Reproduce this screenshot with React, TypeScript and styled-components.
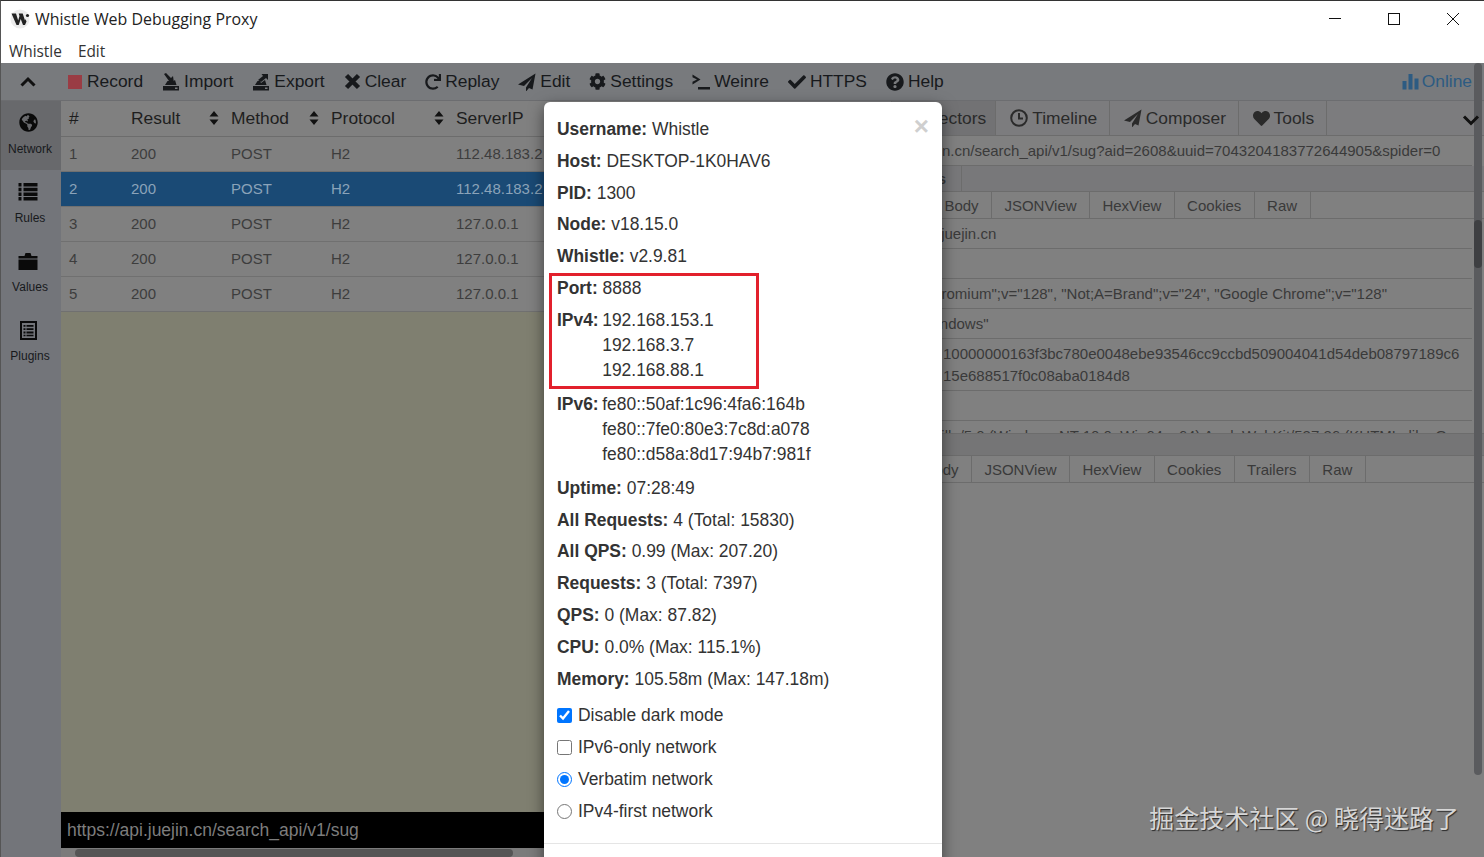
import React from "react"
import styled, { createGlobalStyle } from "styled-components"
import {
  FaCheck,
  FaCog,
  FaGlobeAmericas,
  FaHeart,
  FaQuestionCircle,
  FaRedo,
} from "react-icons/fa"

const GlobalStyle = createGlobalStyle`
  html, body {
    margin: 0;
    padding: 0;
    background: #808080;
  }
  * {
    box-sizing: border-box;
  }
`

const Sans = `"Liberation Sans", Arial, sans-serif`

const Logo = () => (
  <svg width="20" height="20" viewBox="0 0 20 20">
    <circle cx="10" cy="10" r="9.500" fill="#ececec" />
    <path
      d="M1.500 4.500h4.500l2.200 7 1.300-4.500-.8-2.500h4l2.300 7 .5-1.500 1 2.500-1.500 3.500h-2l-2.300-6-2 6H6.500z"
      fill="#222"
    />
    <circle cx="17.500" cy="6.500" r="1.600" fill="#222" />
  </svg>
)

const SendIcon = () => (
  <svg width="18" height="18" viewBox="0 0 18 18">
    <path d="M17.500.5 0 11.500l6 1.500 8-8-6 9.500v4l3-3.500 3.500 1.500z" fill="currentColor" />
  </svg>
)

const RemoveIcon = () => (
  <svg width="17" height="17" viewBox="0 0 17 17">
    <path d="M2.500 2.500l12 12M14.500 2.500l-12 12" stroke="currentColor" strokeWidth="4.500" />
  </svg>
)

const TrayIcon = ({ up }: { up?: boolean }) => (
  <svg width="18" height="18" viewBox="0 0 18 18">
    <path d="M1 13h16v4.500H1zM3 12l2.500-4H8l1 2 4-3 1.500 5z" fill="currentColor" />
    <path
      d={up ? "M6 7l5-4-1.500-2H16v6l-2-2-5 4z" : "M2 1l2-1 5 5 2-2 1 7H5l2-2z"}
      fill="currentColor"
    />
    <rect x="13" y="14.500" width="2.500" height="1.500" fill="#787a7d" />
  </svg>
)

const ConsoleIcon = () => (
  <svg width="18" height="18" viewBox="0 0 18 18">
    <path d="M0.500 1.500 8.500 6.500 0.500 11.500V8.800L5 6.500 0.500 4.200z" fill="currentColor" />
    <rect x="6" y="14" width="12" height="2.500" fill="currentColor" />
  </svg>
)

const StatsIcon = () => (
  <svg width="17" height="17" viewBox="0 0 17 17">
    <path d="M0.500 8h4v8.500h-4zM6.500 1h4v15.500h-4zM12.500 5.500h4v11h-4z" fill="currentColor" />
  </svg>
)

const ClockIcon = () => (
  <svg width="18" height="18" viewBox="0 0 18 18">
    <circle cx="9" cy="9" r="7.800" fill="none" stroke="currentColor" strokeWidth="2" />
    <path d="M9 4v5.500h4" fill="none" stroke="currentColor" strokeWidth="2" />
  </svg>
)

const Chevron = ({ down }: { down?: boolean }) => (
  <svg width="18" height="12" viewBox="0 0 18 12">
    <path
      d={down ? "M2 2.500 9 9.500l7-7" : "M2.500 9.500 9 3l6.500 6.500"}
      fill="none"
      stroke="currentColor"
      strokeWidth="3"
    />
  </svg>
)

const SortIcon = () => (
  <svg width="10" height="16" viewBox="0 0 10 16">
    <path d="M5 1 9.500 6.500H.5zM5 15 .5 9.500h9z" fill="#111" />
  </svg>
)

const ListIcon = () => (
  <svg width="20" height="20" viewBox="0 0 20 20">
    <path
      d="M.5 1h3v3.500h-3zM5.500 1h14v3.500h-14zM.5 5.700h3v3.500h-3zM5.500 5.700h14v3.500h-14zM.5 10.400h3v3.500h-3zM5.500 10.400h14v3.500h-14zM.5 15.100h3v3.500h-3zM5.500 15.100h14v3.500h-14z"
      fill="currentColor"
    />
  </svg>
)

const FolderIcon = () => (
  <svg width="20" height="20" viewBox="0 0 20 20">
    <path d="M.5 5h6l1-3h5l1 3h6v2.500H.5zM.5 8.500h19V19H.5z" fill="currentColor" />
  </svg>
)

const ListAltIcon = () => (
  <svg width="20" height="20" viewBox="0 0 20 20">
    <rect x="3" y="2" width="15" height="17" fill="none" stroke="currentColor" strokeWidth="2" />
    <path
      d="M5.500 5h2v1.800h-2zM8.500 5h7v1.800h-7zM5.500 8.300h2v1.800h-2zM8.500 8.300h7v1.800h-7zM5.500 11.600h2v1.800h-2zM8.500 11.600h7v1.800h-7zM5.500 14.800h2v1.500h-2zM8.500 14.800h7v1.500h-7z"
      fill="currentColor"
    />
  </svg>
)

const MinimizeIcon = () => (
  <svg width="14" height="14" viewBox="0 0 14 14">
    <path d="M1 6.500h12" stroke="#111" strokeWidth="1" />
  </svg>
)

const MaximizeIcon = () => (
  <svg width="14" height="14" viewBox="0 0 14 14">
    <rect x="1.500" y="1.500" width="11" height="11" fill="none" stroke="#111" strokeWidth="1" />
  </svg>
)

const CloseIcon = () => (
  <svg width="14" height="14" viewBox="0 0 14 14">
    <path d="M1 1l12 12M13 1 1 13" stroke="#111" strokeWidth="1" />
  </svg>
)

const toolbarItems = [
  { label: "Import", icon: <TrayIcon /> },
  { label: "Export", icon: <TrayIcon up /> },
  { label: "Clear", icon: <RemoveIcon /> },
  { label: "Replay", icon: <FaRedo size={16} /> },
  { label: "Edit", icon: <SendIcon /> },
  { label: "Settings", icon: <FaCog size={17} /> },
  { label: "Weinre", icon: <ConsoleIcon /> },
  { label: "HTTPS", icon: <FaCheck size={18} /> },
  { label: "Help", icon: <FaQuestionCircle size={18} /> },
]

const sideItems = [
  { label: "Network", icon: <FaGlobeAmericas size={19} />, active: true },
  { label: "Rules", icon: <ListIcon /> },
  { label: "Values", icon: <FolderIcon /> },
  { label: "Plugins", icon: <ListAltIcon /> },
]

const sessions = [
  { id: 1, ip: "112.48.183.2" },
  { id: 2, ip: "112.48.183.2", selected: true },
  { id: 3, ip: "127.0.0.1" },
  { id: 4, ip: "127.0.0.1" },
  { id: 5, ip: "127.0.0.1" },
]

const stats = [
  ["Uptime:", "07:28:49"],
  ["All Requests:", "4 (Total: 15830)"],
  ["All QPS:", "0.99 (Max: 207.20)"],
  ["Requests:", "3 (Total: 7397)"],
  ["QPS:", "0 (Max: 87.82)"],
  ["CPU:", "0.0% (Max: 115.1%)"],
  ["Memory:", "105.58m (Max: 147.18m)"],
]

const App = () => (
  <Window>
    <GlobalStyle />
    <TitleBar>
      <TitleLeft>
        <Logo />
        <TitleText>Whistle Web Debugging Proxy</TitleText>
      </TitleLeft>
      <WindowControls>
        <WindowButton><MinimizeIcon /></WindowButton>
        <WindowButton><MaximizeIcon /></WindowButton>
        <WindowButton><CloseIcon /></WindowButton>
      </WindowControls>
    </TitleBar>
    <MenuBar>
      <span>Whistle</span>
      <span>Edit</span>
    </MenuBar>
    <Workspace>
      <Toolbar>
        <Collapse><Chevron /></Collapse>
        <ToolItems>
          <ToolItem>
            <RecordDot />
            Record
          </ToolItem>
          {toolbarItems.map(item => (
            <ToolItem key={item.label}>
              {item.icon}
              {item.label}
            </ToolItem>
          ))}
        </ToolItems>
        <OnlineStatus>
          <StatsIcon />
          Online
        </OnlineStatus>
      </Toolbar>
      <Body>
        <Sidebar>
          {sideItems.map(item => (
            <SideItem key={item.label} $active={item.active}>
              <SideIcon>{item.icon}</SideIcon>
              {item.label}
            </SideItem>
          ))}
        </Sidebar>
        <LeftPanel>
          <TableHead>
            <HeadCell>#</HeadCell>
            <HeadCell>Result<SortIcon /></HeadCell>
            <HeadCell>Method<SortIcon /></HeadCell>
            <HeadCell>Protocol<SortIcon /></HeadCell>
            <HeadCell>ServerIP</HeadCell>
          </TableHead>
          {sessions.map(s => (
            <TableRow key={s.id} $selected={s.selected}>
              <Cell>{s.id}</Cell>
              <Cell>200</Cell>
              <Cell>POST</Cell>
              <Cell>H2</Cell>
              <Cell>{s.ip}</Cell>
            </TableRow>
          ))}
          <EmptyArea />
          <StatusBar>https://api.juejin.cn/search_api/v1/sug</StatusBar>
          <HScroll><HThumb /></HScroll>
        </LeftPanel>
        <RightPanel>
          <MainTabs>
            <MainTab>Overview</MainTab>
            <MainTab $active>Inspectors</MainTab>
            <MainTab><ClockIcon />Timeline</MainTab>
            <MainTab><SendIcon />Composer</MainTab>
            <MainTab><FaHeart size={17} />Tools</MainTab>
            <CollapseRight><Chevron down /></CollapseRight>
          </MainTabs>
          <InfoRow $indent={86}>
            https://api.juejin.cn/search_api/v1/sug?aid=2608&uuid=7043204183772644905&spider=0
          </InfoRow>
          <PaneTitle><PaneLabel>Headers</PaneLabel></PaneTitle>
          <SubTabs $indent={172}>
            {["Body", "JSONView", "HexView", "Cookies", "Raw"].map(t => (
              <SubTab key={t}>{t}</SubTab>
            ))}
          </SubTabs>
          <RequestRows>
            <InfoRow $indent={157}>api.juejin.cn</InfoRow>
            <InfoRow $indent={0} />
            <InfoRow $indent={157}>
              "Chromium";v="128", "Not;A=Brand";v="24", "Google Chrome";v="128"
            </InfoRow>
            <InfoRow $indent={157}>"Windows"</InfoRow>
            <InfoRow $indent={183}>
              10000000163f3bc780e0048ebe93546cc9ccbd509004041d54deb08797189c6
              <br />
              15e688517f0c08aba0184d8
            </InfoRow>
            <InfoRow $indent={0} />
            <InfoRow $indent={153}>
              Mozilla/5.0 (Windows NT 10.0; Win64; x64) AppleWebKit/537.36 (KHTML, like Ge
            </InfoRow>
          </RequestRows>
          <Splitter />
          <SubTabs $indent={152}>
            {["Body", "JSONView", "HexView", "Cookies", "Trailers", "Raw"].map(t => (
              <SubTab key={t}>{t}</SubTab>
            ))}
          </SubTabs>
        </RightPanel>
      </Body>
      <VScroll><VThumb /></VScroll>
      <Modal>
        <CloseX>×</CloseX>
        <Line><b>Username:</b> Whistle</Line>
        <Line><b>Host:</b> DESKTOP-1K0HAV6</Line>
        <Line><b>PID:</b> 1300</Line>
        <Line><b>Node:</b> v18.15.0</Line>
        <Line><b>Whistle:</b> v2.9.81</Line>
        <Highlight>
          <Line><b>Port:</b> 8888</Line>
          <AddressGroup>
            <b>IPv4:</b>
            <div>
              <div>192.168.153.1</div>
              <div>192.168.3.7</div>
              <div>192.168.88.1</div>
            </div>
          </AddressGroup>
        </Highlight>
        <AddressGroup>
          <b>IPv6:</b>
          <div>
            <div>fe80::50af:1c96:4fa6:164b</div>
            <div>fe80::7fe0:80e3:7c8d:a078</div>
            <div>fe80::d58a:8d17:94b7:981f</div>
          </div>
        </AddressGroup>
        {stats.map(([name, value]) => (
          <Line key={name}><b>{name}</b> {value}</Line>
        ))}
        <Options>
          <OptionLabel><input type="checkbox" defaultChecked />Disable dark mode</OptionLabel>
          <OptionLabel><input type="checkbox" />IPv6-only network</OptionLabel>
          <OptionLabel><input type="radio" name="network" defaultChecked />Verbatim network</OptionLabel>
          <OptionLabel><input type="radio" name="network" />IPv4-first network</OptionLabel>
        </Options>
        <ModalFooter />
      </Modal>
    </Workspace>
    <Watermark>掘金技术社区 @ 晓得迷路了</Watermark>
  </Window>
)

const Window = styled.div`
  position: relative;
  display: flex;
  flex-direction: column;
  width: 1484px;
  height: 857px;
  overflow: hidden;
  border-top: 1px solid #333;
  border-left: 1px solid #555;
  background: #fff;
  font-family: ${Sans};
`
const TitleBar = styled.div`
  display: flex;
  align-items: center;
  justify-content: space-between;
  height: 36px;
  padding-left: 9px;
`
const TitleLeft = styled.div`
  display: flex;
  align-items: center;
  gap: 5px;
`
const TitleText = styled.div`
  font-family: "Open Sans", sans-serif;
  font-size: 15.950px;
  color: #222;
`
const WindowControls = styled.div`
  display: flex;
  padding-right: 2px;
`
const WindowButton = styled.div`
  display: flex;
  align-items: center;
  justify-content: center;
  width: 59px;
  height: 36px;
`
const MenuBar = styled.div`
  display: flex;
  gap: 16px;
  height: 26px;
  padding: 4px 0 0 8px;
  font-family: "Open Sans", sans-serif;
  font-size: 15.400px;
  color: #333;
`
const Workspace = styled.div`
  position: relative;
  flex: 1;
  display: flex;
  flex-direction: column;
  min-height: 0;
  background: #808080;
`
const Toolbar = styled.div`
  display: flex;
  align-items: center;
  flex: none;
  height: 38px;
  padding-right: 12px;
  background: #787a7d;
  border-bottom: 1px solid #6c6d70;
  color: #17191c;
  font-size: 17.400px;
`
const Collapse = styled.div`
  display: flex;
  justify-content: center;
  width: 54px;
  color: #111;
`
const ToolItems = styled.div`
  flex: 1;
  display: flex;
  align-items: center;
  gap: 19px;
  padding-left: 13px;
`
const ToolItem = styled.div`
  display: flex;
  align-items: center;
  gap: 4px;
  &:first-child {
    gap: 5px;
  }
`
const RecordDot = styled.span`
  width: 14px;
  height: 14px;
  background: #9a3c44;
`
const OnlineStatus = styled.div`
  display: flex;
  align-items: center;
  gap: 3px;
  color: #2d5b82;
`
const Body = styled.div`
  flex: 1;
  display: flex;
  min-height: 0;
`
const Sidebar = styled.div`
  flex: none;
  width: 60px;
  background: #73757a;
  color: #17191c;
`
const SideItem = styled.div<{ $active?: boolean }>`
  display: flex;
  flex-direction: column;
  align-items: center;
  height: 69px;
  padding: 12px 2px 0 0;
  font-size: 12px;
  background: ${props => (props.$active ? "#68696c" : "transparent")};
`
const SideIcon = styled.div`
  height: 29px;
  margin-right: 4px;
  color: #0a0a0a;
`
const LeftPanel = styled.div`
  flex: none;
  display: flex;
  flex-direction: column;
  width: 699px;
  background: #808080;
`
const tableColumns = `62px 100px 100px 125px 1fr`
const TableHead = styled.div`
  display: grid;
  grid-template-columns: ${tableColumns};
  height: 36px;
  padding-bottom: 1px;
  border-bottom: 1px solid #6c6c6c;
`
const HeadCell = styled.div`
  display: flex;
  align-items: center;
  justify-content: space-between;
  padding: 0 4px 0 8px;
  font-size: 17.400px;
  color: #1e1e1e;
`
const TableRow = styled.div<{ $selected?: boolean }>`
  display: grid;
  grid-template-columns: ${tableColumns};
  align-items: center;
  height: 35px;
  padding-bottom: 1px;
  border-bottom: 1px solid #707070;
  font-size: 15px;
  color: ${props => (props.$selected ? "#8ba3b9" : "#3d3d3d")};
  background: ${props => (props.$selected ? "#1a4a75" : "transparent")};
`
const Cell = styled.div`
  padding-left: 8px;
`
const EmptyArea = styled.div`
  flex: 1;
  background: #7f7f70;
`
const StatusBar = styled.div`
  display: flex;
  align-items: center;
  flex: none;
  height: 36px;
  padding-left: 6px;
  background: #000;
  color: #7d7d7d;
  font-size: 17.500px;
`
const HScroll = styled.div`
  flex: none;
  height: 9px;
  padding: 1px 0 0 14px;
  background: #7b7b7b;
`
const HThumb = styled.div`
  width: 438px;
  height: 8px;
  border-radius: 4px;
  background: #555;
`
const RightPanel = styled.div`
  flex: 1;
  min-width: 0;
  overflow: hidden;
  display: flex;
  flex-direction: column;
  color: #3a3a3a;
`
const MainTabs = styled.div`
  display: flex;
  flex: none;
  height: 35px;
  padding-left: 33px;
  border-bottom: 1px solid #6c6c6c;
  background: #7c7c7e;
`
const MainTab = styled.div<{ $active?: boolean }>`
  display: flex;
  align-items: center;
  gap: 4px;
  padding: 0 ${props => (props.$active ? "9px" : "11.500px")} 0 14px;
  font-size: 17.400px;
  color: #2a2a2a;
  border-right: 1px solid #6c6c6c;
  background: ${props => (props.$active ? "#727274" : "transparent")};
`
const CollapseRight = styled.div`
  position: absolute;
  z-index: 2;
  right: 4px;
  top: 49px;
  color: #111;
`
const InfoRow = styled.div<{ $indent: number }>`
  flex: none;
  min-height: 30px;
  padding: 4px 0 3px ${props => props.$indent}px;
  margin-right: 12px;
  border-bottom: 1px solid #6c6c6c;
  font-size: 15px;
  line-height: 22px;
  white-space: nowrap;
`
const PaneTitle = styled.div`
  display: flex;
  flex: none;
  height: 26px;
  background: #78787a;
  border-bottom: 1px solid #6c6c6c;
`
const PaneLabel = styled.div`
  display: flex;
  align-items: center;
  justify-content: flex-end;
  width: 202px;
  padding-right: 15px;
  border-right: 1px solid #6c6c6c;
  font-size: 15px;
  font-weight: bold;
`
const SubTabs = styled.div<{ $indent: number }>`
  display: flex;
  flex: none;
  height: 27px;
  padding-left: ${props => props.$indent}px;
  border-bottom: 1px solid #6c6c6c;
`
const SubTab = styled.div`
  display: flex;
  align-items: center;
  padding: 0 12.400px;
  border-right: 1px solid #6c6c6c;
  font-size: 15px;
`
const RequestRows = styled.div`
  flex: none;
  height: 214px;
  overflow: hidden;
`
const Splitter = styled.div`
  flex: none;
  height: 23px;
  background: #757576;
  border-top: 1px solid #6c6c6c;
  border-bottom: 1px solid #6c6c6c;
`
const VScroll = styled.div`
  position: absolute;
  top: 0;
  right: 2px;
  width: 8px;
  height: 712px;
  border-radius: 4px;
  background: #5a5b5e;
`
const VThumb = styled.div`
  position: absolute;
  top: 157px;
  width: 8px;
  height: 48px;
  border-radius: 4px;
  background: #3e3f42;
`
const Modal = styled.div`
  position: absolute;
  z-index: 3;
  top: 39px;
  left: 543px;
  width: 398px;
  height: 800px;
  padding: 15px 13px 0;
  border-radius: 6px;
  background: #fff;
  box-shadow: 0 5px 15px rgba(0, 0, 0, 0.5);
  color: #333;
  font-size: 17.450px;
  line-height: 25px;
`
const CloseX = styled.div`
  position: absolute;
  top: 12px;
  right: 13px;
  font-size: 26px;
  font-weight: bold;
  color: #cfcfcf;
`
const Line = styled.div`
  margin-bottom: 6.800px;
`
const AddressGroup = styled.div`
  display: flex;
  gap: 3.500px;
  margin-bottom: 9px;
`
const Highlight = styled.div`
  width: 210px;
  margin: -3px 0 3px -8px;
  padding: 0 0 0 5px;
  border: 3px solid #e2202c;
  ${AddressGroup} {
    margin-bottom: 3px;
  }
`
const Options = styled.div`
  display: flex;
  flex-direction: column;
  gap: 7px;
  margin-top: 11px;
`
const OptionLabel = styled.label`
  display: flex;
  align-items: center;
  gap: 6px;
  input {
    width: 15px;
    height: 15px;
    margin: 0;
  }
`
const ModalFooter = styled.div`
  margin: 19px -13px 0;
  border-top: 1px solid #e5e5e5;
`
const Watermark = styled.div`
  position: absolute;
  z-index: 4;
  right: 25px;
  bottom: 22px;
  font-family: "Noto Sans CJK SC", sans-serif;
  font-size: 25px;
  line-height: 36px;
  color: #d6d6d6;
  text-shadow: 1px 1px 1px #2a2a2a;
  white-space: nowrap;
`

export default App
